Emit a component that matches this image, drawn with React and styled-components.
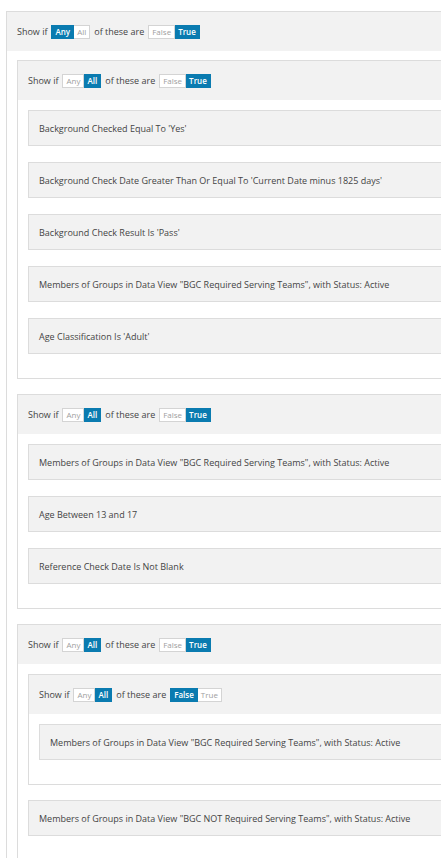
import React from "react";
import styled, { createGlobalStyle } from "styled-components";

const GlobalStyle = createGlobalStyle`
  html, body {
    margin: 0;
    padding: 0;
    background: #fff;
    overflow: hidden;
  }
  body {
    font-family: "Open Sans", "Noto Sans", sans-serif;
    color: #444;
  }
`;

const Page = styled.div`
  padding: 11px 0 0 6px;
  width: 900px;
`;

const Group = styled.div`
  border: 1px solid #dcdcdc;
  background: #fff;
  margin-bottom: ${(p) => (p.$last ? "0" : "15px")};
`;

const Header = styled.div`
  display: flex;
  align-items: center;
  height: 39px;
  padding: 0 10px;
  background: #f2f2f2;
  font-size: 9px;
  color: #444;
`;

const Body = styled.div`
  padding: ${(p) => (p.$tight ? "9px" : "10px")} 10px 8px;
`;

const Label = styled.span`
  margin-right: 4px;
  white-space: nowrap;
`;

const Toggle = styled.span`
  display: inline-flex;
  margin-right: 4px;
`;

const ToggleBtn = styled.span`
  display: inline-flex;
  align-items: center;
  height: 12px;
  padding: 0 3px;
  font-size: 8px;
  border: 1px solid ${(p) => (p.$on ? "#0a7bb0" : "#d4d4d4")};
  background: ${(p) => (p.$on ? "#0a7bb0" : "#fff")};
  color: ${(p) => (p.$on ? "#fff" : "#a0a0a0")};
  font-weight: ${(p) => (p.$on ? 600 : 400)};
  & + & {
    border-left: none;
  }
`;

const Row = styled.div`
  display: flex;
  align-items: center;
  box-sizing: border-box;
  height: 36px;
  padding-left: 10px;
  margin-bottom: 16px;
  border: 1px solid #dcdcdc;
  background: #f2f2f2;
  font-size: 9px;
  color: #444;
  white-space: nowrap;
`;

function Switch({ options, value }) {
  return (
    <Toggle>
      {options.map((o) => (
        <ToggleBtn key={o} $on={o === value}>
          {o}
        </ToggleBtn>
      ))}
    </Toggle>
  );
}

function ShowIf({ mode, truth }) {
  return (
    <Header>
      <Label>Show if</Label>
      <Switch options={["Any", "All"]} value={mode} />
      <Label>of these are</Label>
      <Switch options={["False", "True"]} value={truth} />
    </Header>
  );
}

export default function App() {
  return (
    <>
      <GlobalStyle />
      <Page>
        <Group $last>
          <ShowIf mode="Any" truth="True" />
          <Body $tight>
            <Group>
              <ShowIf mode="All" truth="True" />
              <Body>
                <Row>Background Checked Equal To 'Yes'</Row>
                <Row>Background Check Date Greater Than Or Equal To 'Current Date minus 1825 days'</Row>
                <Row>Background Check Result Is 'Pass'</Row>
                <Row>Members of Groups in Data View "BGC Required Serving Teams", with Status: Active</Row>
                <Row>Age Classification Is 'Adult'</Row>
              </Body>
            </Group>
            <Group>
              <ShowIf mode="All" truth="True" />
              <Body>
                <Row>Members of Groups in Data View "BGC Required Serving Teams", with Status: Active</Row>
                <Row>Age Between 13 and 17</Row>
                <Row>Reference Check Date Is Not Blank</Row>
              </Body>
            </Group>
            <Group>
              <ShowIf mode="All" truth="True" />
              <Body>
                <Group>
                  <ShowIf mode="All" truth="False" />
                  <Body>
                    <Row>Members of Groups in Data View "BGC Required Serving Teams", with Status: Active</Row>
                  </Body>
                </Group>
                <Row>Members of Groups in Data View "BGC NOT Required Serving Teams", with Status: Active</Row>
              </Body>
            </Group>
          </Body>
        </Group>
      </Page>
    </>
  );
}
